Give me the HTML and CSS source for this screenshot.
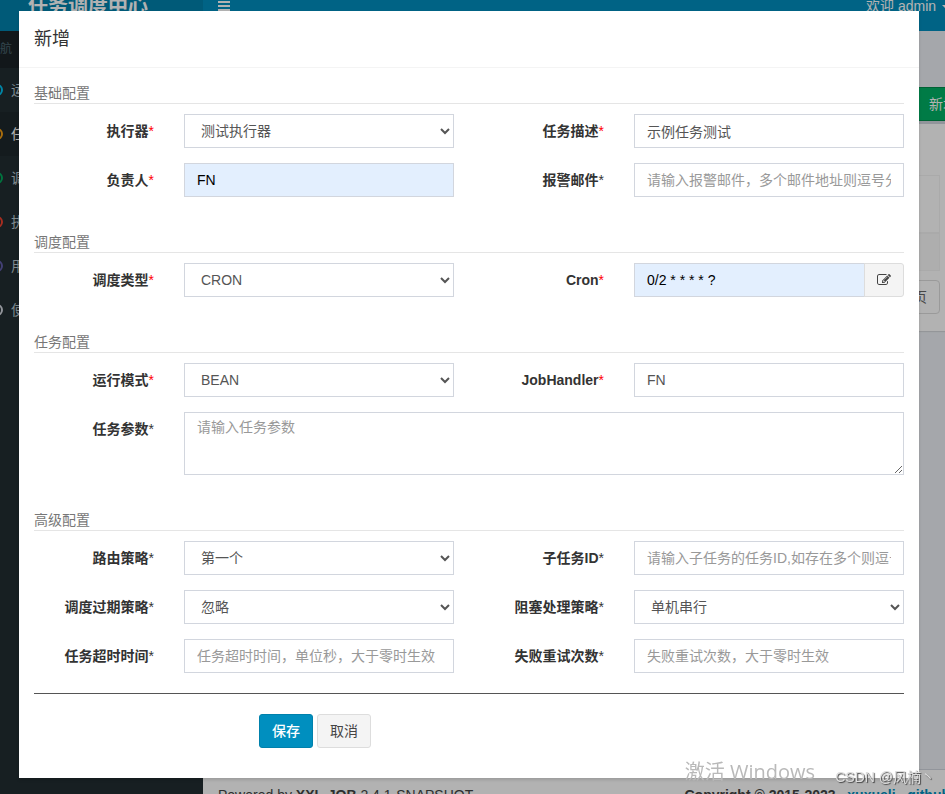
FILE: index.html
```html
<!DOCTYPE html>
<html lang="zh-CN">
<head>
    <meta charset="UTF-8">
    <meta name="viewport" content="width=device-width, initial-scale=1.0">
    <title>任务调度中心</title>
    <link rel="stylesheet" href="styles.css">
</head>
<body>
<div class="page">
    <header class="main-header">
        <a href="#" class="logo">任务调度中心</a>
        <nav class="navbar">
            <a href="#" class="sidebar-toggle" aria-label="切换导航">
                <svg width="12" height="12" viewBox="0 0 12 12"><path d="M0 2h12M0 6h12M0 10h12" stroke="currentColor" stroke-width="2"/></svg>
            </a>
            <a href="#" class="user-menu">欢迎 admin <span class="caret"></span></a>
        </nav>
    </header>

    <div class="wrapper">
        <aside class="sidebar">
            <div class="menu-header">导航</div>
            <ul class="menu">
                <li><a href="#"><i class="ring aqua"></i>运行报表</a></li>
                <li class="active"><a href="#"><i class="ring yellow"></i>任务管理</a></li>
                <li><a href="#"><i class="ring green"></i>调度日志</a></li>
                <li><a href="#"><i class="ring red"></i>执行器管理</a></li>
                <li><a href="#"><i class="ring purple"></i>用户管理</a></li>
                <li><a href="#"><i class="ring gray"></i>使用教程</a></li>
            </ul>
        </aside>

        <div class="main">
            <main class="content">
                <div class="toolbar">
                    <button type="button" class="btn btn-success">新增</button>
                </div>
                <div class="box">
                    <div class="job-list">
                        <div class="job-head"></div>
                        <div class="job-row"></div>
                    </div>
                    <div class="pager">
                        <a href="#">末页</a>
                    </div>
                </div>
            </main>
            <footer class="footer">
                <span>Powered by <b>XXL-JOB</b> 2.4.1-SNAPSHOT</span>
                <strong>Copyright © 2015-2023 &nbsp; <a href="#">xuxueli</a> &nbsp; <a href="#">github</a></strong>
            </footer>
        </div>
    </div>

    <!-- 新增任务 -->
    <div class="modal">
        <div class="modal-content" role="dialog" aria-labelledby="addTitle">
            <div class="modal-header">
                <h4 id="addTitle">新增</h4>
            </div>
            <form class="modal-body">
                <h5 class="section-title">基础配置</h5>
                <div class="form-group">
                    <label for="jobGroup">执行器<span class="required">*</span></label>
                    <div class="field">
                        <select class="form-control" id="jobGroup"><option>测试执行器</option></select>
                    </div>
                    <label for="jobDesc">任务描述<span class="required">*</span></label>
                    <div class="field">
                        <input type="text" class="form-control" id="jobDesc" value="示例任务测试">
                    </div>
                </div>
                <div class="form-group">
                    <label for="author">负责人<span class="required">*</span></label>
                    <div class="field">
                        <input type="text" class="form-control filled" id="author" value="FN">
                    </div>
                    <label for="alarmEmail">报警邮件<span class="optional">*</span></label>
                    <div class="field">
                        <input type="text" class="form-control" id="alarmEmail" placeholder="请输入报警邮件，多个邮件地址则逗号分隔">
                    </div>
                </div>

                <h5 class="section-title">调度配置</h5>
                <div class="form-group">
                    <label for="scheduleType">调度类型<span class="required">*</span></label>
                    <div class="field">
                        <select class="form-control" id="scheduleType"><option>CRON</option></select>
                    </div>
                    <label for="cron">Cron<span class="required">*</span></label>
                    <div class="field input-group">
                        <input type="text" class="form-control filled" id="cron" value="0/2 * * * * ?">
                        <button type="button" class="btn btn-default" aria-label="编辑 Cron">
                            <svg width="14" height="14" viewBox="0 0 1792 1792" fill="currentColor"><path d="M888 1184l116-116-152-152-116 116v56h96v96h56zm440-720q-16-16-33 1l-350 350q-17 17-1 33t33-1l350-350q17-17 1-33zm80 594v190q0 119-84.500 203.500t-203.500 84.500h-832q-119 0-203.500-84.500t-84.500-203.500v-832q0-119 84.500-203.500t203.500-84.500h832q63 0 117 25 15 7 18 23 3 17-9 29l-49 49q-14 14-32 8-23-6-45-6h-832q-66 0-113 47t-47 113v832q0 66 47 113t113 47h832q66 0 113-47t47-113v-126q0-13 9-22l64-64q15-15 35-7t20 29zm-96-738l288 288-672 672h-288v-288zm444 132l-92 92-288-288 92-92q28-28 68-28t68 28l152 152q28 28 28 68t-28 68z"/></svg>
                        </button>
                    </div>
                </div>

                <h5 class="section-title">任务配置</h5>
                <div class="form-group">
                    <label for="glueType">运行模式<span class="required">*</span></label>
                    <div class="field">
                        <select class="form-control" id="glueType"><option>BEAN</option></select>
                    </div>
                    <label for="handler">JobHandler<span class="required">*</span></label>
                    <div class="field">
                        <input type="text" class="form-control" id="handler" value="FN">
                    </div>
                </div>
                <div class="form-group">
                    <label for="param">任务参数<span class="optional">*</span></label>
                    <div class="field wide">
                        <textarea class="form-control" id="param" placeholder="请输入任务参数"></textarea>
                    </div>
                </div>

                <h5 class="section-title">高级配置</h5>
                <div class="form-group">
                    <label for="route">路由策略<span class="optional">*</span></label>
                    <div class="field">
                        <select class="form-control" id="route"><option>第一个</option></select>
                    </div>
                    <label for="childJob">子任务ID<span class="optional">*</span></label>
                    <div class="field">
                        <input type="text" class="form-control" id="childJob" placeholder="请输入子任务的任务ID,如存在多个则逗号分隔">
                    </div>
                </div>
                <div class="form-group">
                    <label for="misfire">调度过期策略<span class="optional">*</span></label>
                    <div class="field">
                        <select class="form-control" id="misfire"><option>忽略</option></select>
                    </div>
                    <label for="block">阻塞处理策略<span class="optional">*</span></label>
                    <div class="field">
                        <select class="form-control" id="block"><option>单机串行</option></select>
                    </div>
                </div>
                <div class="form-group">
                    <label for="timeout">任务超时时间<span class="optional">*</span></label>
                    <div class="field">
                        <input type="text" class="form-control" id="timeout" placeholder="任务超时时间，单位秒，大于零时生效">
                    </div>
                    <label for="retry">失败重试次数<span class="optional">*</span></label>
                    <div class="field">
                        <input type="text" class="form-control" id="retry" placeholder="失败重试次数，大于零时生效">
                    </div>
                </div>

                <hr>
                <div class="actions">
                    <button type="submit" class="btn btn-primary">保存</button>
                    <button type="button" class="btn btn-default">取消</button>
                </div>
            </form>
        </div>
    </div>
</div>

<div class="activate">激活 Windows</div>
<div class="credit">CSDN @风楠丶</div>
</body>
</html>
```

FILE: styles.css
```css
* {
    box-sizing: border-box;
}
body {
    margin: 0;
    height: 100vh;
    overflow: hidden;
    font-family: "Liberation Sans", "Noto Sans CJK SC", sans-serif;
    font-size: 14px;
    line-height: 20px;
    color: #333;
}
a {
    color: inherit;
    text-decoration: none;
}

/* page is scrolled a little, so it runs past the window on every side */
.page {
    position: relative;
    display: flex;
    flex-direction: column;
    height: calc(100vh + 45px);
    margin: -19px -20px 0 -27px;
}
.main-header {
    display: flex;
    height: 50px;
    color: #fff;
}
.logo {
    width: 230px;
    background: #0081ac;
    font-size: 20px;
    font-weight: bold;
    line-height: 50px;
    text-align: center;
}
.navbar {
    flex: 1;
    display: flex;
    justify-content: space-between;
    background: #008fbf;
}
.navbar a {
    padding: 15px;
}
.sidebar-toggle svg {
    display: block;
    margin-top: 4px;
}
.caret {
    display: inline-block;
    margin-left: 2px;
    vertical-align: middle;
    border-top: 4px solid;
    border-left: 4px solid transparent;
    border-right: 4px solid transparent;
}

.wrapper {
    flex: 1;
    display: flex;
}
.sidebar {
    width: 230px;
    background: #222d32;
    color: #b8c7ce;
}
.menu-header {
    padding: 8px 15px 9px;
    background: #1a2226;
    color: #4b646f;
    font-size: 12px;
}
.menu {
    margin: 0;
    padding: 0;
    list-style: none;
}
.menu a {
    display: flex;
    align-items: center;
    height: 44px;
    padding-left: 18px;
}
.menu .active {
    background: #1e282c;
    color: #fff;
}
.ring {
    width: 12px;
    height: 12px;
    margin-right: 8px;
    border: 2px solid;
    border-radius: 50%;
}
.aqua { color: #00c0ef; }
.yellow { color: #f39c12; }
.green { color: #00a65a; }
.red { color: #f0412f; }
.purple { color: #605ca8; }
.gray { color: #d2d6de; }

.main {
    flex: 1;
    display: flex;
    flex-direction: column;
    background: #ecf0f5;
}
.content {
    flex: 1;
    padding: 56px 0 15px 15px;
}
.toolbar {
    display: flex;
    justify-content: flex-end;
}
.box {
    padding: 51px 25px 17px 10px;
    border-top: 3px solid #d2d6de;
    background: #fff;
    box-shadow: 0 1px 1px rgba(0, 0, 0, 0.1);
}
.job-list {
    border: 1px solid #f4f4f4;
}
.job-head {
    height: 58px;
    border-bottom: 2px solid #f4f4f4;
}
.job-row {
    height: 36px;
    background: #f9f9f9;
}
.pager {
    display: flex;
    justify-content: flex-end;
    margin-top: 9px;
}
.pager a {
    padding: 6px 12px;
    border: 1px solid #ddd;
    border-radius: 4px;
    color: #666;
}
.footer {
    display: flex;
    justify-content: space-between;
    padding: 15px;
    border-top: 1px solid #d2d6de;
    background: #fff;
    color: #444;
}
.footer a {
    color: #008fbf;
}

/* modal */
.modal {
    position: absolute;
    inset: 0;
    padding-top: 30px;
    background: rgba(0, 0, 0, 0.3);
}
.modal-content {
    max-width: 900px;
    margin: 0 auto;
    background: #fff;
    box-shadow: 0 2px 3px rgba(0, 0, 0, 0.125);
}
.modal-header {
    padding: 15px;
    border-bottom: 1px solid #f4f4f4;
}
.modal-header h4 {
    margin: 0;
    font-size: 18px;
    font-weight: normal;
    line-height: 26px;
}
.modal-body {
    padding: 15px;
}
.section-title {
    margin: 0 0 10px;
    border-bottom: 1px solid #e5e5e5;
    color: #777;
    font-size: 14px;
    font-weight: normal;
}
.form-group + .section-title {
    margin-top: 35px;
}
.form-group {
    display: grid;
    grid-template-columns: 2fr 4fr 2fr 4fr;
    margin: 0 -15px 15px;
}
.form-group label {
    padding: 7px 15px 0;
    font-weight: bold;
    text-align: right;
}
.required,
.optional {
    font-weight: normal;
}
.required {
    color: red;
}
.field {
    min-width: 0;
    padding: 0 15px;
}
.wide {
    grid-column: span 3;
}
.form-control {
    display: block;
    width: 100%;
    height: 34px;
    padding: 6px 12px;
    border: 1px solid #d2d6de;
    border-radius: 0;
    background: #fff;
    color: #555;
    font: inherit;
    outline: none;
}
.form-control::placeholder {
    color: #999;
}
textarea.form-control {
    height: 63px;
    padding: 4px 12px;
    resize: vertical;
}
.filled {
    background: #e3effe;
    color: #000;
}
.input-group {
    display: flex;
}
.input-group .form-control {
    flex: 1;
    min-width: 0;
}
.input-group .btn {
    width: 40px;
    margin-left: -1px;
    border-radius: 0 3px 3px 0;
}
.input-group svg {
    display: block;
}
.modal-body hr {
    margin: 20px 0;
    border: 0;
    border-top: 1px solid #555;
}
.actions {
    display: flex;
    gap: 4px;
    margin-bottom: 15px;
    padding-left: 225px;
}
.btn {
    height: 34px;
    padding: 6px 12px;
    border: 1px solid transparent;
    border-radius: 3px;
    font: inherit;
}
.btn-primary {
    border-color: #0081ac;
    background: #008fbf;
    color: #fff;
    font-weight: 500;
}
.btn-default {
    border-color: #ddd;
    background: #f4f4f4;
    color: #444;
}
.btn-success {
    margin-right: -5px;
    border-color: #008d4c;
    border-radius: 0;
    background: #00b065;
    color: #fff;
}

/* watermarks over everything */
.activate,
.credit {
    position: fixed;
    white-space: nowrap;
    pointer-events: none;
}
.activate {
    right: 130px;
    bottom: 8px;
    color: #b9b9b9;
    font-family: "Open Sans", "Noto Sans CJK SC", sans-serif;
    font-size: 20px;
    line-height: 28px;
}
.credit {
    right: 10px;
    bottom: 7px;
    color: #ddd;
    text-shadow: 1px 1px 1px #444;
}
```
